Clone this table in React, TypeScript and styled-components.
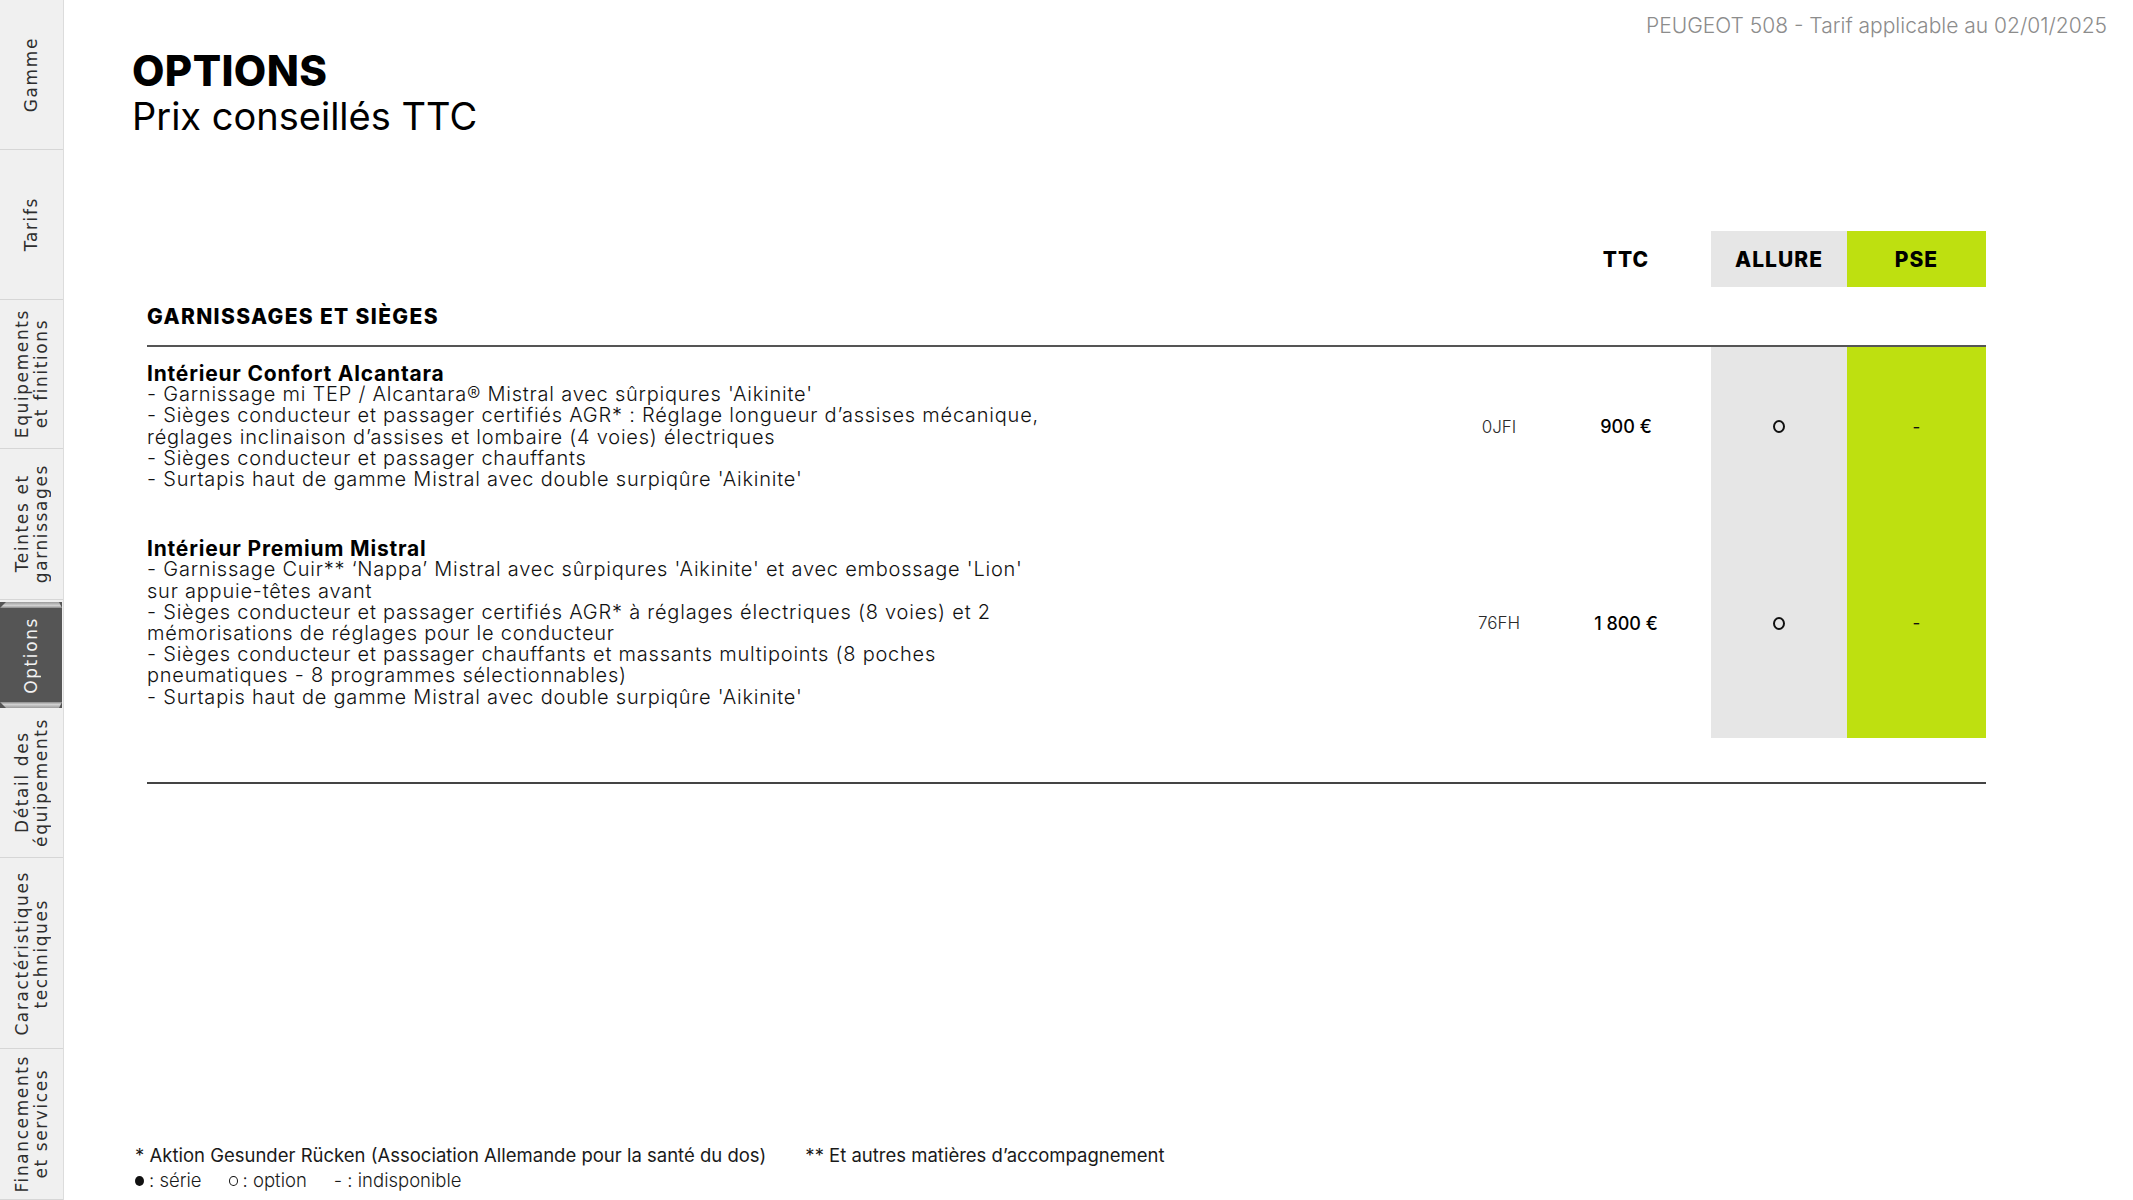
import React from "react";
import styled, { createGlobalStyle } from "styled-components";

type Tab = { lines: string[]; height: number; active?: boolean };

type Option = {
  title: string;
  lines: string[];
  code: string;
  price: string;
  allure: "option" | "serie" | "none";
  pse: "option" | "serie" | "none";
  padTop: number;
  padBottom: number;
};

const tabs: Tab[] = [
  { lines: ["Gamme"], height: 150 },
  { lines: ["Tarifs"], height: 150 },
  { lines: ["Equipements", "et finitions"], height: 149 },
  { lines: ["Teintes et", "garnissages"], height: 151 },
  { lines: ["Options"], height: 106, active: true },
  { lines: ["Détail des", "équipements"], height: 150 },
  { lines: ["Caractéristiques", "techniques"], height: 191 },
  { lines: ["Financements", "et services"], height: 151 },
];

const options: Option[] = [
  {
    title: "Intérieur Confort Alcantara",
    lines: [
      "- Garnissage mi TEP / Alcantara® Mistral avec sûrpiqures 'Aikinite'",
      "- Sièges conducteur et passager certifiés AGR* : Réglage longueur d’assises mécanique,",
      "réglages inclinaison d’assises et lombaire (4 voies) électriques",
      "- Sièges conducteur et passager chauffants",
      "- Surtapis haut de gamme Mistral avec double surpiqûre 'Aikinite'",
    ],
    code: "0JFI",
    price: "900 €",
    allure: "option",
    pse: "none",
    padTop: 16,
    padBottom: 24,
  },
  {
    title: "Intérieur Premium Mistral",
    lines: [
      "- Garnissage Cuir** ‘Nappa’ Mistral avec sûrpiqures 'Aikinite' et avec embossage 'Lion'",
      "sur appuie-têtes avant",
      "- Sièges conducteur et passager certifiés AGR* à réglages électriques (8 voies) et 2",
      "mémorisations de réglages pour le conducteur",
      "- Sièges conducteur et passager chauffants et massants multipoints (8 poches",
      "pneumatiques - 8 programmes sélectionnables)",
      "- Surtapis haut de gamme Mistral avec double surpiqûre 'Aikinite'",
    ],
    code: "76FH",
    price: "1 800 €",
    allure: "option",
    pse: "none",
    padTop: 24,
    padBottom: 30,
  },
];

function Mark({ kind }: { kind: Option["allure"] }) {
  if (kind === "option") return <Ring />;
  if (kind === "serie") return <Dot />;
  return <Dash>-</Dash>;
}

export default function App() {
  return (
    <Page>
      <GlobalStyle />
      <Sidebar>
        {tabs.map((t) => (
          <TabItem key={t.lines.join(" ")} $height={t.height} $active={t.active}>
            <TabLabel $active={t.active}>
              {t.lines.map((l) => (
                <span key={l}>{l}</span>
              ))}
            </TabLabel>
          </TabItem>
        ))}
      </Sidebar>

      <Main>
        <TopNote>PEUGEOT 508 - Tarif applicable au 02/01/2025</TopNote>
        <Heading>OPTIONS</Heading>
        <SubHeading>Prix conseillés TTC</SubHeading>

        <PriceGrid>
          <HeadCell $col={3}>TTC</HeadCell>
          <HeadCell $col={5} $bg="#e6e6e6">ALLURE</HeadCell>
          <HeadCell $col={6} $bg="#bee010">PSE</HeadCell>

          <SectionTitle>GARNISSAGES ET SIÈGES</SectionTitle>

          {options.map((o) => (
            <React.Fragment key={o.code}>
              <DescCell $pt={o.padTop} $pb={o.padBottom}>
                <OptionTitle>{o.title}</OptionTitle>
                {o.lines.map((l, i) => (
                  <DescLine key={i}>{l}</DescLine>
                ))}
              </DescCell>
              <ValueCell $col={2} $pt={o.padTop} $pb={o.padBottom}>
                <Code>{o.code}</Code>
              </ValueCell>
              <ValueCell $col={3} $pt={o.padTop} $pb={o.padBottom}>
                <Price>{o.price}</Price>
              </ValueCell>
              <ValueCell $col={5} $pt={o.padTop} $pb={o.padBottom} $bg="#e6e6e6">
                <Mark kind={o.allure} />
              </ValueCell>
              <ValueCell $col={6} $pt={o.padTop} $pb={o.padBottom} $bg="#bee010">
                <Mark kind={o.pse} />
              </ValueCell>
            </React.Fragment>
          ))}

          <BottomRule />
        </PriceGrid>

        <Footer>
          <FootRow>
            <span>* Aktion Gesunder Rücken (Association Allemande pour la santé du dos)</span>
            <span>** Et autres matières d’accompagnement</span>
          </FootRow>
          <Legend>
            <LegendItem>
              <SmallDot /> : série
            </LegendItem>
            <LegendItem>
              <SmallRing /> : option
            </LegendItem>
            <LegendItem>- : indisponible</LegendItem>
          </Legend>
        </Footer>
      </Main>
    </Page>
  );
}

const GlobalStyle = createGlobalStyle`
  html, body {
    margin: 0;
    padding: 0;
    background: #ffffff;
  }
  body {
    font-family: Inter, "Liberation Sans", sans-serif;
    color: #111;
  }
`;

const Page = styled.div`
  display: flex;
  width: 2133px;
  height: 1200px;
  overflow: hidden;
`;

const Sidebar = styled.nav`
  width: 63px;
  flex-shrink: 0;
  display: flex;
  flex-direction: column;
  background: #f0f0f0;
  border-right: 1px solid #dcdcdc;
`;

const TabItem = styled.div<{ $height: number; $active?: boolean }>`
  position: relative;
  height: ${(p) => p.$height}px;
  flex-shrink: 0;
  box-sizing: border-box;
  display: flex;
  align-items: center;
  justify-content: center;
  border-bottom: ${(p) => (p.$active ? "none" : "1px solid #d6d6d6")};
  margin-top: ${(p) => (p.$active ? "2px" : "0")};
  margin-right: ${(p) => (p.$active ? "1px" : "0")};
  background: ${(p) => (p.$active ? "#555555" : "transparent")};

  &::before,
  &::after {
    content: "";
    display: ${(p) => (p.$active ? "block" : "none")};
    position: absolute;
    left: 0;
    right: 0;
    height: 6px;
    clip-path: polygon(6px 0, calc(100% - 3px) 0, 100% 100%, 0 100%);
  }
  &::before {
    top: 0;
    background: linear-gradient(#9a9a9a, #d2d2d2 60%, #8a8a8a);
  }
  &::after {
    bottom: 0;
    transform: scaleY(-1);
    background: linear-gradient(#9a9a9a, #d2d2d2 60%, #8a8a8a);
  }
`;

const TabLabel = styled.div<{ $active?: boolean }>`
  writing-mode: vertical-rl;
  transform: rotate(180deg);
  display: flex;
  flex-direction: column;
  align-items: center;
  font-family: "DejaVu Sans", sans-serif;
  font-size: 17px;
  line-height: 19px;
  letter-spacing: 1.6px;
  color: ${(p) => (p.$active ? "#f2f2f2" : "#2e2e2e")};
  white-space: nowrap;
`;

const Main = styled.main`
  flex: 1;
  display: flex;
  flex-direction: column;
  box-sizing: border-box;
  padding: 0 26px 0 68px;
`;

const TopNote = styled.div`
  align-self: flex-end;
  margin-top: 12px;
  font-size: 21px;
  line-height: 28px;
  font-weight: 300;
  color: #8c8c8c;
`;

const Heading = styled.h1`
  margin: 9px 0 0;
  font-size: 42px;
  line-height: 44px;
  font-weight: 800;
  letter-spacing: 0.4px;
  color: #000;
`;

const SubHeading = styled.h2`
  margin: 0;
  font-size: 38px;
  line-height: 46px;
  font-weight: 400;
  color: #000;
`;

const PriceGrid = styled.div`
  display: grid;
  grid-template-columns: 1fr 130px 124px 23px 136px 139px;
  width: 1839px;
  margin: 92px 0 0 15px;
`;

const HeadCell = styled.div<{ $col: number; $bg?: string }>`
  grid-column: ${(p) => p.$col};
  grid-row: 1;
  height: 56px;
  display: flex;
  align-items: center;
  justify-content: center;
  background: ${(p) => p.$bg || "transparent"};
  font-size: 21px;
  font-weight: 800;
  letter-spacing: 1px;
  color: #000;
`;

const SectionTitle = styled.div`
  grid-column: 1 / -1;
  height: 58px;
  display: flex;
  align-items: center;
  border-bottom: 2px solid #555;
  font-size: 21px;
  font-weight: 800;
  letter-spacing: 1.35px;
  color: #000;
`;

const DescCell = styled.div<{ $pt: number; $pb: number }>`
  grid-column: 1;
  padding: ${(p) => p.$pt}px 0 ${(p) => p.$pb}px;
  font-size: 20px;
  line-height: 21.2px;
`;

const OptionTitle = styled.div`
  font-size: 21px;
  font-weight: 700;
  letter-spacing: 0.8px;
  color: #000;
`;

const DescLine = styled.div`
  font-weight: 300;
  letter-spacing: 0.78px;
  color: #111;
  white-space: nowrap;
`;

const ValueCell = styled.div<{ $col: number; $pt: number; $pb: number; $bg?: string }>`
  grid-column: ${(p) => p.$col};
  display: flex;
  align-items: center;
  justify-content: center;
  padding: ${(p) => p.$pt}px 0 ${(p) => p.$pb}px;
  background: ${(p) => p.$bg || "transparent"};
`;

const Code = styled.span`
  font-size: 17px;
  font-weight: 300;
  color: #2a2a2a;
`;

const Price = styled.span`
  font-size: 18px;
  font-weight: 500;
  color: #000;
`;

const Ring = styled.span`
  width: 8px;
  height: 9px;
  border: 2.5px solid #111;
  border-radius: 50%;
`;

const Dot = styled.span`
  width: 11px;
  height: 11px;
  background: #111;
  border-radius: 50%;
`;

const Dash = styled.span`
  font-size: 17px;
  color: #111;
`;

const BottomRule = styled.div`
  grid-column: 1 / -1;
  margin-top: 44px;
  border-top: 2px solid #444;
`;

const Footer = styled.footer`
  margin-top: auto;
  margin-left: 3px;
  padding-bottom: 7px;
  font-size: 18.5px;
  line-height: 25px;
  color: #1a1a1a;
`;

const FootRow = styled.div`
  display: flex;
  gap: 39px;
`;

const Legend = styled.div`
  display: flex;
  gap: 27px;
`;

const LegendItem = styled.span`
  display: inline-flex;
  align-items: center;
  gap: 5px;
  font-weight: 300;
`;

const SmallDot = styled.span`
  width: 9px;
  height: 10px;
  background: #111;
  border-radius: 50%;
`;

const SmallRing = styled.span`
  width: 7px;
  height: 8px;
  border: 1.5px solid #111;
  border-radius: 50%;
`;
